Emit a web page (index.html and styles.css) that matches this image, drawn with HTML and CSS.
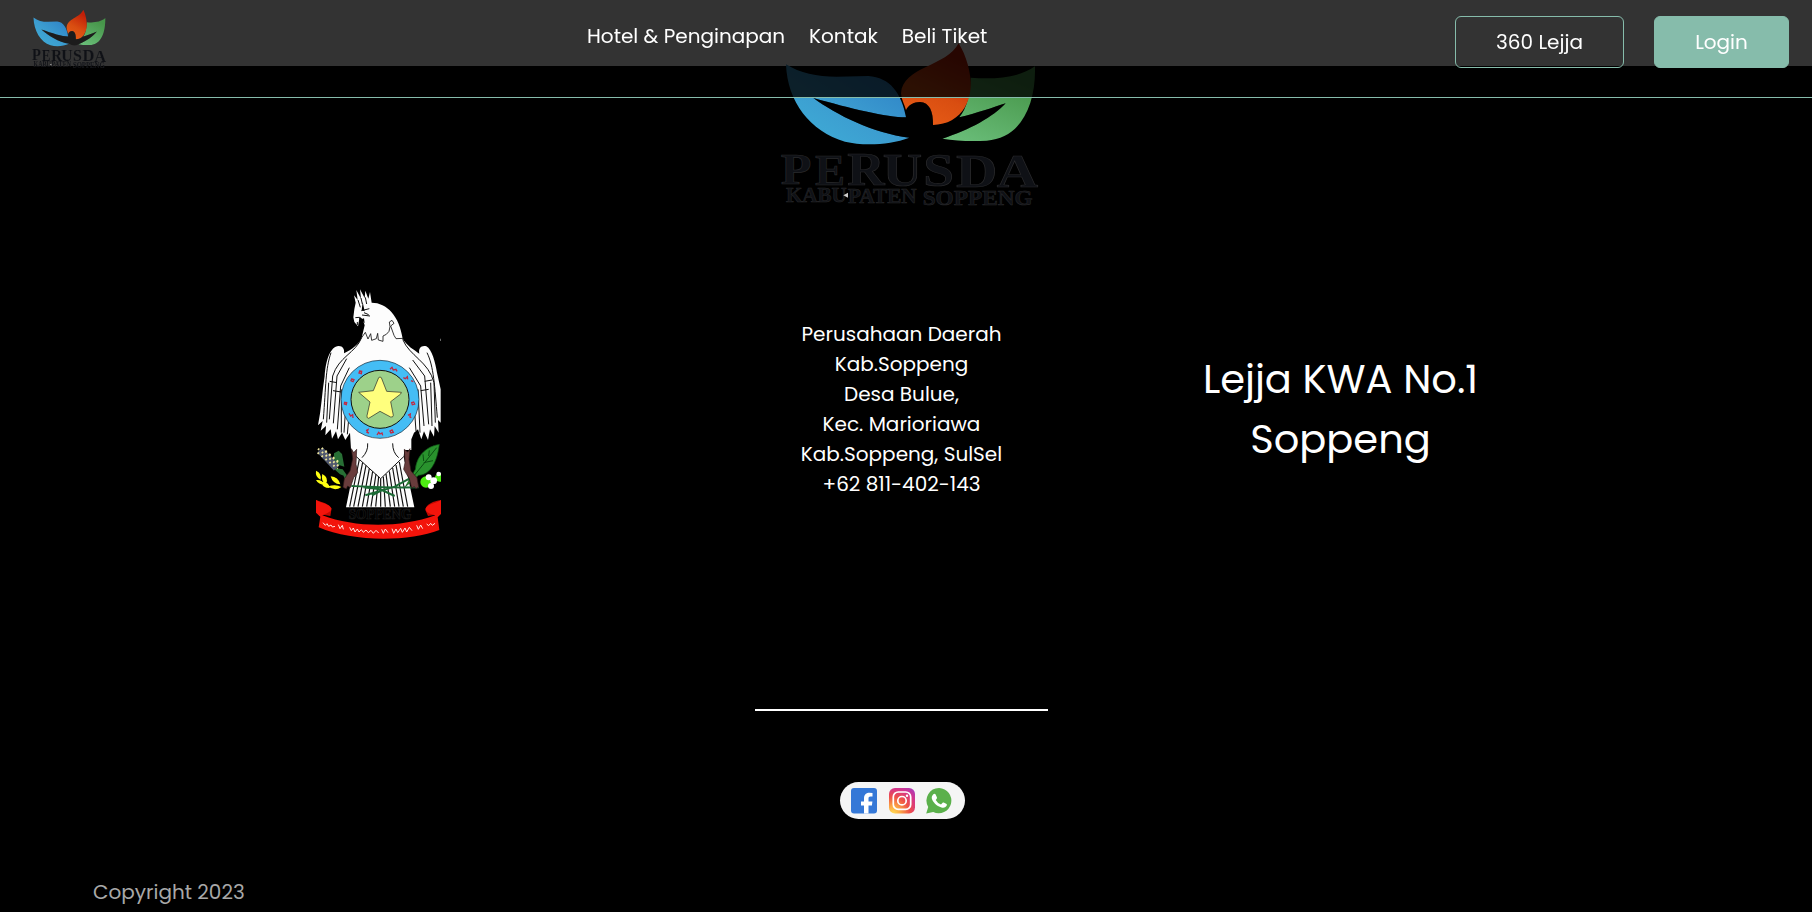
FILE: index.html
```html
<!DOCTYPE html>
<html lang="id">
<head>
<meta charset="utf-8">
<title>Lejja</title>
<link rel="stylesheet" href="styles.css">
</head>
<body>
<svg class="defs" width="0" height="0" aria-hidden="true">
  <defs>
    <linearGradient id="blue" x1="0" y1="1" x2="1" y2="0"><stop offset="0" stop-color="#3fb0d8"/><stop offset=".45" stop-color="#3c9dd0"/><stop offset="1" stop-color="#2b7cc4"/></linearGradient>
    <linearGradient id="red" x1="0" y1="1" x2=".4" y2="0"><stop offset="0" stop-color="#ea5f18"/><stop offset=".5" stop-color="#d94e11"/><stop offset="1" stop-color="#c11f08"/></linearGradient>
    <linearGradient id="green" x1="0" y1="1" x2=".5" y2="0"><stop offset="0" stop-color="#6cc07c"/><stop offset="1" stop-color="#47964a"/></linearGradient>
    <symbol id="perusda" viewBox="0 0 900 570" preserveAspectRatio="none">
      <path fill="url(#blue)" d="M78 103C120 130 170 140 230 140L325 138C390 142 425 190 438 262C380 262 270 235 160 204C230 255 340 310 448 323C390 345 310 348 255 335C150 305 82 215 78 103Z"/>
      <path fill="url(#green)" d="M632 143C700 148 775 145 825 109C828 230 780 325 680 332C635 335 590 333 547 326C630 300 700 260 737 220C700 232 650 250 598 262C620 235 632 190 632 143Z"/>
      <path fill="url(#red)" d="M596 40C618 75 635 130 632 175C627 220 610 250 575 271C560 280 540 284 519 285C520 245 508 217 480 216C460 216 445 225 438 240C434 225 424 208 423 190C428 110 560 110 596 40Z"/>
      <path class="figure" d="M160 204C270 235 380 262 438 262C440 230 455 216 480 216C510 217 520 245 519 285C560 286 580 270 598 262C650 250 700 232 737 220C700 260 630 300 547 326Q500 350 448 323C340 310 230 255 160 204Z"/>
      <g class="wordmark">
        <text x="62" y="461" font-size="136" textLength="92" lengthAdjust="spacingAndGlyphs">P</text>
        <text x="165" y="464" font-size="136" textLength="90" lengthAdjust="spacingAndGlyphs">E</text>
        <text x="262" y="466" font-size="138" textLength="112" lengthAdjust="spacingAndGlyphs">R</text>
        <text x="368" y="468" font-size="138" textLength="118" lengthAdjust="spacingAndGlyphs">U</text>
        <text x="490" y="469" font-size="138" textLength="92" lengthAdjust="spacingAndGlyphs">S</text>
        <text x="588" y="470" font-size="138" textLength="124" lengthAdjust="spacingAndGlyphs">D</text>
        <text x="710" y="472" font-size="138" textLength="124" lengthAdjust="spacingAndGlyphs">A</text>
        <g class="wordmark-sub">
          <text x="78" y="516" font-size="60" textLength="182" lengthAdjust="spacingAndGlyphs">KABU</text>
          <text x="264" y="520" font-size="60" textLength="206" lengthAdjust="spacingAndGlyphs">PATEN</text>
          <text x="488" y="526" font-size="62" textLength="330" lengthAdjust="spacingAndGlyphs">SOPPENG</text>
        </g>
      </g>
      <path fill="#ccc" d="M250 496l14-8v15z"/>
    </symbol>
  </defs>
</svg>

<header class="navbar">
  <a class="brand" href="#"><svg class="brand-logo"><use href="#perusda"/></svg></a>
  <nav class="menu">
    <a href="#">Hotel &amp; Penginapan</a>
    <a href="#">Kontak</a>
    <a href="#">Beli Tiket</a>
  </nav>
  <div class="actions">
    <a class="btn btn-outline" href="#">360 Lejja</a>
    <a class="btn btn-solid" href="#">Login</a>
  </div>
</header>

<footer class="footer">
  <svg class="footer-logo"><use href="#perusda"/></svg>
  <div class="columns">
    <svg class="crest" viewBox="0 0 402 768">
      <!-- body and head -->
      <path fill="#fdfdfd" d="M127 70L131 50L126 28L137 42L133 12L147 38L144 10L158 36L160 14L169 38L174 18L179 50C225 50 262 90 272 158C285 180 305 190 322 203C318 185 330 177 343 181C360 190 370 230 375 260L386 310V410L378 402L380 440L368 420L366 452L354 430L348 462L336 436L328 460L318 430L306 440L298 460V492H277L275 512L307 664L102 664L133 512L117 490L114 440L100 462L90 440L78 460L72 436L60 458L56 430L40 448L42 420L26 434L32 405L18 418C28 370 30 320 38 270C42 220 55 182 80 180C93 180 98 190 96 202C120 190 140 175 149 155L158 118L152 100L143 92L138 121L127 108L124 94Z"/>
      <path fill="#000" d="M152 48l6 28-9-3zM156 97l-8 3 10 12z"/>
      <g fill="none" stroke="#111" stroke-width="3">
        <path d="M138 42l7 22M147 36l4 18M160 34l4 20M148 74l24-6M150 87l24 3M156 80l14 6M130 95l12-1 3 9M136 108v9"/>
        <path d="M149 155l11-16M160 139l8 20 8-16 3 20 14-5 4-16 2 20 14 4v-16l10-5 8-9 3-14-2-14 8-5 6 9-10 8 10 28 6 10 22-1" stroke-width="2.5"/>
        <path d="M149 155C130 202 80 212 62 270L52 400M272 160C292 210 350 226 366 290L370 410M104 218L75 270L64 412M112 245L86 300L76 430M88 310L88 440M100 380L96 440M110 400L106 445M57 200C40 250 42 300 34 400M50 290L44 410M302 222L338 270L350 415M292 245L326 300L336 420M318 310L324 440M308 380L312 435M345 200C365 240 368 300 376 395M356 290L360 420M53 286l22 4M63 314l25 4M326 314l24-4M338 286l22-4"/>
        <path d="M167 472q2 24-17 43M242 472q0 28 18 43"/>
        <path d="M133 512L206 578L275 512"/>
        <path stroke-width="3.500" d="M142 520l-29 142M152 529l-27 133M162 538l-24 124M172 547l-21 115M182 556l-18 106M192 564l-15 98M200 572l-9 90M206 578v84M214 572l6 90M222 564l13 98M232 556l16 106M242 546l19 116M252 537l22 125M262 528l25 134"/>
      </g>
      <!-- shield ring -->
      <circle cx="204" cy="340" r="117" fill="#44bdf5" stroke="#123" stroke-width="2"/>
      <circle cx="204" cy="340" r="87" fill="#9dd18a" stroke="#111" stroke-width="3"/>
      <path d="M200 275Q204 271 208 275L224 316L268 319L266 324L236 347L244 388Q243 395 236 393L204 376L170 397Q163 396 165 389L174 348L140 319L184 314Z" fill="#ffff7d" stroke="#222" stroke-width="2"/>
      <g fill="none" stroke="#c12b44" stroke-width="4">
        <path d="M119 279l7 2-3 6-6-3zM143 255l6 1-1 7-7-2zM234 250l6-6 4 8 8-2 3 6M274 275l6 3 6-6 1 8M297 284l7 3M299 350l6-2 3 6-7 2zM288 388l7-4-1 9 4 2M234 435l6-3 4 7-7 2zM195 447l5-8 4 5 6-3 2 7M162 434l6-3-3 8 6 2M111 382l5 8 6-4 1 10M98 349l6 1-1 6-6-2z"/>
      </g>
      <!-- cotton, rice and leaves -->
      <g fill="#286f35"><path d="M66 502l14-8 10 10 7 38-32-10zM62 545l30 5 18 25-26-10zM90 558l26 20-15 8z"/></g>
      <path fill="#29922d" stroke="#0b4d12" stroke-width="2" d="M382 475C350 480 315 502 310 550L280 602L320 568C358 566 376 524 382 475Z"/>
      <path fill="none" stroke="#0b4d12" stroke-width="3" d="M374 485L304 572M335 525l-2-20M350 510l2-17M335 530l28-6"/>
      <path fill="none" stroke="#1b6a35" stroke-width="6" d="M118 600C160 602 235 606 320 604M160 628L248 602L292 578M154 604L205 610L248 630M180 628L215 610"/>
      <path d="M24 492L74 546" stroke="#50586e" stroke-width="23" fill="none"/>
      <g stroke="#eee59b" stroke-width="6" stroke-dasharray="5 10" fill="none"><path d="M18 488l64 54M29 486l55 48M17 500l60 48M40 494l44 38"/></g>
      <g fill="#ffff12"><path d="M12 554q18 8 14 27-17-8-14-27zM31 564q21 11 11 31-17-10-11-31zM56 571q23 2 29 24-23-1-29-24zM12 582q19-2 27 15-20-1-27-15zM29 587q22 0 24 19-23 0-24-19zM48 601q24-8 40 2-20 14-40-2z"/></g>
      <g fill="#4dec12"><circle cx="342" cy="588" r="17"/><path d="M387 561c-10 0-18 6-18 14s8 12 18 12z"/></g>
      <g fill="#fff"><circle cx="350" cy="574" r="9"/><circle cx="365" cy="584" r="10"/><circle cx="357" cy="600" r="9"/><circle cx="380" cy="564" r="7"/></g>
      <!-- legs -->
      <path fill="#693c3c" stroke="#2b1616" stroke-width="2" d="M118 488L125 500L134 490L132 535L137 560L125 575L115 605L107 600L103 609L93 604L97 578L114 555L122 518ZM294 488L287 498L277 490L279 530L275 550L292 578L299 606L307 602L312 608L320 603L315 575L297 555L291 520Z"/>
      <!-- ribbon -->
      <text x="110" y="698" class="crest-name" textLength="188" lengthAdjust="spacingAndGlyphs">SOPPENG</text>
      <path fill="#c50800" d="M12 642C35 650 55 655 58 672L55 690L33 686L22 690L12 672ZM387 643C365 645 342 655 340 672L348 690L372 686L387 675Z"/>
      <path fill="#f3140b" d="M12 642C30 654 52 652 59 668C55 680 42 682 31 688C130 726 265 726 370 688C355 684 340 680 341 667C350 652 370 654 387 642V684L377 694L382 732C290 768 120 768 20 724L25 692L12 680Z"/>
      <path fill="none" stroke="#ffe6e2" stroke-width="3" d="M33 710l7 8 5-5 5 8 7-4 4 6 8-2M79 716l5 12 7-10 3 12M113 724l5 10 6-8 5 12 7-9 5 9 7-7 6 8 8-7 7 8 8-7 7 9 8-9 8 8M209 730l5 12 6-13 8 11M240 728l5 14 7-13 5 11 9-13 5 12 8-13 5 12 8-14 8 10M314 718l5 12 7-13 6 11M344 714l6 5 6-7 5 6 8-6"/>
      <path fill="#999" d="M385 158h2v7h-2z"/>
    </svg>
    <address class="address">
      <span>Perusahaan Daerah</span>
      <span>Kab.Soppeng</span>
      <span>Desa Bulue,</span>
      <span>Kec. Marioriawa</span>
      <span>Kab.Soppeng, SulSel</span>
      <span>+62 811-402-143</span>
    </address>
    <div class="tagline"><span>Lejja KWA No.1</span><span>Soppeng</span></div>
  </div>
  <hr class="divider">
  <div class="social">
    <svg viewBox="0 0 26 26"><rect width="26" height="25.5" rx="3" fill="#3578d7"/><path fill="#fff" d="M13 25.5V17.5H10V13.5H13V10.5C13 6.500 15.500 4.800 18.500 4.800L21.500 5V8.500H19.500C18 8.500 17.500 9.300 17.500 10.500V13.500H21.400L20.900 17.500H17.500V25.500Z"/></svg>
    <svg viewBox="0 0 26 26"><defs><radialGradient id="ig" cx=".15" cy="1" r="1.25"><stop offset="0" stop-color="#ffdc54"/><stop offset=".22" stop-color="#fcab45"/><stop offset=".52" stop-color="#ee5048"/><stop offset=".78" stop-color="#d5358a"/><stop offset="1" stop-color="#a83bbd"/></radialGradient></defs><rect width="26" height="25.500" rx="6" fill="url(#ig)"/><g fill="none" stroke="#fff" stroke-width="1.700"><rect x="4.300" y="4" width="17.400" height="17.400" rx="5"/><circle cx="13" cy="12.700" r="4.200"/></g><circle cx="18" cy="7.800" r="1.200" fill="#fff"/></svg>
    <svg viewBox="0 0 26 26"><path fill="#5bb04b" d="M13.200 0A12.600 12.600 0 1 1 7.200 23.900L.2 25.600L2.200 18.900A12.600 12.600 0 0 1 13.200 0Z"/><path fill="#fff" d="M7.100 6.500Q8.500 5.200 9.500 6.300L11 9.500Q11.400 10.300 9.700 12Q11.500 15.300 15 16.500L16.600 14.700Q17 14.300 17.700 14.600L20.600 16Q21.300 16.400 20.500 18Q18.800 20.500 15.500 19.500C10.500 18 6.500 14 5.700 10Q5.500 8 7.100 6.500Z"/></svg>
  </div>
  <p class="copyright">Copyright 2023</p>
</footer>
</body>
</html>
```
FILE: styles.css
```css
* { box-sizing: border-box; }
body {
  margin: 0;
  height: 912px;
  overflow: hidden;
  padding-top: 66px;
  background: #fff;
  color: #fff;
  font: 400 20px/30px Poppins, Inter, "Open Sans", sans-serif;
}
a { color: inherit; text-decoration: none; white-space: nowrap; }
span { white-space: nowrap; }
.defs { position: absolute; }

.navbar {
  position: fixed;
  inset: 0 0 auto 0;
  z-index: 10;
  height: 98px;
  display: grid;
  grid-template-columns: 587px 1fr auto;
  align-items: start;
  padding-right: 23px;
  background: rgba(0, 0, 0, .8);
  border-bottom: 1px solid #86bcab;
}
.brand { padding: 5px 0 0 26px; }
.brand-logo { display: block; width: 86.5px; height: 68.5px; }
.menu { display: flex; gap: 24px; padding-top: 21px; }
.actions { display: flex; gap: 30px; padding-top: 16px; }
.btn {
  display: flex;
  align-items: center;
  justify-content: center;
  height: 52px;
  border: 1px solid #86bcab;
  border-radius: 6px;
}
.btn-outline { width: 169px; }
.btn-solid { width: 135px; background: #86bcab; }

.figure { fill: #000; fill-opacity: .45; }
.wordmark {
  font-family: "Liberation Serif", serif;
  font-weight: 700;
  fill: #0f1116;
  stroke: #29292b;
  stroke-width: 2px;
}
.wordmark-sub { stroke-width: 1.5px; }

.footer {
  height: 846px;
  display: flex;
  flex-direction: column;
  align-items: center;
  background: #000;
}
.footer-logo {
  flex: none;
  width: 300px;
  height: 190px;
  margin: -36px 0 0 8px;
}
.columns {
  align-self: flex-start;
  display: grid;
  grid-template-columns: 134px 309px 293px 146px 293px;
  align-items: start;
  height: 256px;
  margin: 66px 0 0 312px;
}
.crest { grid-column: 1; width: 134px; height: 256px; }
.address,
.tagline {
  display: flex;
  flex-direction: column;
  align-items: center;
}
.address { grid-column: 3; padding-top: 33px; font-style: normal; }
.tagline {
  grid-column: 5;
  padding-top: 63px;
  font-size: 40px;
  line-height: 60px;
}
.crest-name {
  font: 700 44px "Liberation Serif", serif;
  fill: #000;
  stroke: #1c1c1c;
  stroke-width: 2px;
}
.divider {
  flex: none;
  width: 293px;
  height: 2px;
  margin: 167px 0 0 -9px;
  border: 0;
  background: #fff;
}
.social {
  flex: none;
  display: flex;
  gap: 11.5px;
  align-items: center;
  width: 125px;
  height: 37px;
  margin: 71px 0 0 -8px;
  padding-left: 11.5px;
  border-radius: 19px;
  background: #f5f5f5;
}
.social svg { flex: none; width: 26px; height: 26px; }
.copyright {
  align-self: flex-start;
  margin: 58px 0 0 93px;
  color: #a8a8a8;
}
```
